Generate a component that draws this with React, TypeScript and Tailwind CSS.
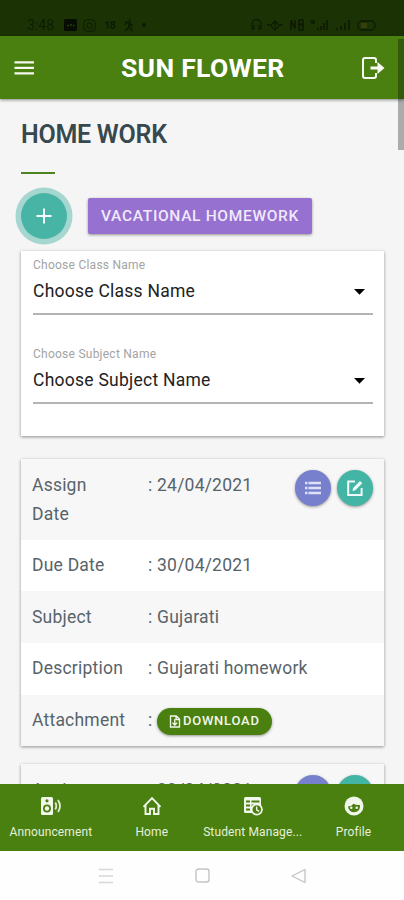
import React from 'react';

const iconBase = 'block shrink-0';

function StatusBar() {
  return (
    <div className="flex h-9 shrink-0 items-end bg-[#1b3304] pr-[26px] pb-[4px] pl-[27px] text-[#0e1b04]">
      <span className="w-[37px] text-[14px] leading-[14px] tracking-[0px]">3:48</span>
      <svg className={iconBase} width="13" height="13" viewBox="0 0 13 13">
        <rect x="0" y="0" width="13" height="12" rx="1.5" fill="#070d02" />
        <path d="M3 6.5h2M6 6h2M9 6.5h1.5" stroke="#274211" strokeWidth="1.5" />
      </svg>
      <svg className={iconBase + ' ml-[6px]'} width="13" height="13" viewBox="0 0 13 13" fill="none" stroke="currentColor">
        <rect x="0.7" y="0.7" width="11.6" height="11.6" rx="4" />
        <circle cx="6.5" cy="6.5" r="2.7" />
      </svg>
      <span className="ml-[8px] w-[11px] text-[11px] leading-[13px] font-bold tracking-[-0.8px]">18</span>
      <svg className={iconBase + ' ml-[9px]'} width="10" height="14" viewBox="0 0 10 14" fill="none" stroke="currentColor" strokeWidth="1.5">
        <circle cx="6" cy="1.8" r="1" fill="currentColor" stroke="none" />
        <path d="M1 7l1-2.5L5.3 4 5 8l2 2 .6 3M5 8l-1.4 3L1 13M5.3 4.5L7 7h2" />
      </svg>
      <span className="mb-[5px] ml-[8px] size-[4px] rounded-full bg-current" />
      <svg className={iconBase + ' ml-auto'} width="128" height="14" viewBox="0 0 128 14" fill="none" stroke="currentColor" strokeWidth="1.3">
        <path d="M2 9V6a4.5 4.5 0 0 1 9 0v3M2 7v4h2V7M11 7v4H9V7" />
        <path d="M17 7h4l4-4 4 4h4M21 8l4 4 4-4M25 4v6" />
        <path d="M41 12V2l4 9V2M49 2h4v4h-4zM49 7h4v5h-4z" strokeWidth="1.7" />
        <path d="M60 3h5M61 5h4M68 10v2M71 8v4M74 5v7M77 2v10" strokeWidth="1.7" />
        <path d="M87 10v2M91 8v4M95 5v7M99 2v10" strokeWidth="1.7" />
        <rect x="108" y="3" width="17" height="9" rx="4" />
        <path d="M111 7.500h6" stroke="#35400a" strokeWidth="5" />
      </svg>
    </div>
  );
}

function Header() {
  return (
    <header className="relative z-10 flex h-[63px] shrink-0 items-center bg-[#4a8010] pl-[14px] shadow-[0_1px_3px_rgba(0,0,0,0.45)]">
      <svg className={iconBase} width="20" height="16" viewBox="0 0 20 16" stroke="#f4f8ee" strokeWidth="2.2">
        <path d="M0.500 2.300h19.500M0.500 7.800h19.500M0.500 13.300h19.500" />
      </svg>
      <h1 className="ml-[87px] w-[164px] whitespace-nowrap text-[26.5px] leading-[30px] font-bold tracking-[0.3px] text-white">SUN FLOWER</h1>
      <svg className={iconBase + ' ml-[76px]'} width="24" height="24" viewBox="0 0 24 24" fill="none">
        <path d="M15 7V4.200Q15 2 13 2H4Q2 2 2 4v16q0 2 2 2h9q2 0 2-2.200V17" stroke="#f7faf3" strokeWidth="2" />
        <path d="M9.500 10.500h7V6l7 6-7 6v-4.500h-7z" fill="#f7faf3" />
      </svg>
    </header>
  );
}

function SelectField({ label, gap }: { label: string; gap?: boolean }) {
  return (
    <div className={gap ? 'mt-[31px]' : ''}>
      <div className="h-4 text-[12px] leading-4 tracking-[0.25px] text-[#a3a3a3]">{label}</div>
      <div className="flex h-[42px] items-start justify-between border-b-2 border-[#b4b4b4] pt-[6px] pr-[8px]">
        <span className="text-[17.5px] leading-[24px] tracking-[0.25px] text-[#222]">{label}</span>
        <svg className={iconBase + ' mt-[10px]'} width="11" height="6" viewBox="0 0 11 6">
          <path d="M0 0h11L5.500 5.800z" fill="#000" />
        </svg>
      </div>
    </div>
  );
}

function ActionButtons() {
  return (
    <div className="-mt-[0.6px] ml-auto flex gap-[6px]">
      <button className="flex size-9 items-center justify-center rounded-full bg-[#7780cc] shadow-[0_1px_3px_rgba(0,0,0,0.4)]">
        <svg className={iconBase} width="18" height="16" viewBox="0 0 18 16" stroke="#dfe1f6" strokeWidth="2.600">
          <path d="M1 3h2.500M4.500 3h12.500M1 8h2.500M4.500 8h12.500M1 13h2.500M4.500 13h12.500" />
        </svg>
      </button>
      <button className="flex size-9 items-center justify-center rounded-full bg-[#42b5a5] shadow-[0_1px_3px_rgba(0,0,0,0.4)]">
        <svg className={iconBase} width="18" height="18" viewBox="0 0 18 18" fill="none" stroke="#f0fbf9" strokeWidth="2">
          <path d="M9 2.500H2.200V16H15.600V9" />
          <path d="M6.500 12l.6-3L14 2l2.300 2.300-7 7z" fill="#f0fbf9" stroke="none" />
        </svg>
      </button>
    </div>
  );
}

function Row({ label, striped, tall, children }: { label: string; striped?: boolean; tall?: boolean; children: React.ReactNode }) {
  return (
    <div className={'flex px-[11px] pt-[11.6px] text-[17.5px] leading-[29px] tracking-[0.22px] text-[#58636a] ' + (striped ? 'bg-[#f7f7f7] ' : 'bg-white ') + (tall ? 'h-[80.5px]' : 'h-[51.7px]')}>
      <span className="w-[116px] shrink-0 pr-8 whitespace-normal">{label}</span>
      {children}
    </div>
  );
}

const cardShadow = 'shadow-[0_1px_3px_rgba(0,0,0,0.42)]';

function DownloadButton() {
  return (
    <button className="mt-[1.5px] ml-[4.5px] flex h-[27px] w-[115px] items-center rounded-full bg-[#4a8010] pl-[12px] text-[13px] leading-[28px] font-medium tracking-[0.75px] text-[#f2f7ec] shadow-[0_1px_3px_rgba(0,0,0,0.4)]">
      <svg className={iconBase + ' mr-[2px]'} width="12" height="13" viewBox="0 0 12 13" fill="none" stroke="currentColor" strokeWidth="1.3">
        <path d="M1.500 1h5.800L10.500 4v8h-9zM7 1v3.500h3.500" />
        <path d="M5.800 4v6M3.500 7.800L5.800 10l2.300-2.200" />
      </svg>
      DOWNLOAD
    </button>
  );
}

function NavItem({ label, children }: { label: string; children: React.ReactNode }) {
  return (
    <div className="flex w-[101px] flex-col items-center pt-[12px]">
      <div className="flex h-[20px] items-center">{children}</div>
      <span className="mt-[8px] whitespace-nowrap text-[12px] leading-4 tracking-[0.12px] text-[#e6efdc]">{label}</span>
    </div>
  );
}

function BottomNav() {
  return (
    <nav className="relative z-10 flex h-[67px] shrink-0 bg-[#4a8010] pl-[0.5px]">
      <NavItem label="Announcement">
        <svg className={iconBase} width="22" height="20" viewBox="0 0 22 20" fill="none">
          <path fillRule="evenodd" clipRule="evenodd" d="M2.500 1h9Q13 1 13 2.500v15q0 1.500-1.500 1.500h-9Q1 19 1 17.500v-15Q1 1 2.500 1zM7 3.200a1.600 1.600 0 1 0 0 3.200 1.600 1.600 0 0 0 0-3.200zM7 8.500a4 4 0 1 0 0 8 4 4 0 0 0 0-8z" fill="#f2f7ec" />
          <circle cx="7" cy="12.500" r="2.200" fill="#f2f7ec" />
          <path d="M15.300 6.500q2 3.500 0 7M18 4q4 6 0 12" stroke="#e3edd8" strokeWidth="1.800" />
        </svg>
      </NavItem>
      <NavItem label="Home">
        <svg className={iconBase} width="20" height="20" viewBox="0 0 20 20" fill="none" stroke="#f2f7ec" strokeWidth="1.900">
          <path d="M1.500 10.800L10 2l8.500 8.800M3.500 9v9H8v-5.300h4V18h4.500V9" />
        </svg>
      </NavItem>
      <NavItem label="Student Manage...">
        <svg className={iconBase} width="20" height="20" viewBox="0 0 20 20">
          <rect x="1" y="1" width="17" height="16" rx="1.500" fill="#f2f7ec" />
          <path d="M3 5.500h4M8.500 5.500h8M3 9.500h4M8.500 9.500h7M3 13.500h4" stroke="#4a8010" strokeWidth="1.800" />
          <circle cx="13.800" cy="13.500" r="6" fill="#f2f7ec" />
          <circle cx="13.800" cy="13.500" r="4.300" fill="#4a8010" />
          <path d="M13.600 10.500v3.300l2.500 1.600" fill="none" stroke="#f2f7ec" strokeWidth="1.300" />
        </svg>
      </NavItem>
      <NavItem label="Profile">
        <svg className={iconBase} width="20" height="20" viewBox="0 0 20 20">
          <circle cx="10" cy="10" r="9.500" fill="#f2f7ec" />
          <path d="M4 10.500q4-.3 5.500-2.800 3 1.800 6.500 1.300.5 7.300-6 7.300-5 0-6-5.800z" fill="#4a8010" />
          <circle cx="7.300" cy="11.800" r="1.200" fill="#f2f7ec" />
          <circle cx="12.700" cy="11.800" r="1.200" fill="#f2f7ec" />
        </svg>
      </NavItem>
    </nav>
  );
}

function SystemBar() {
  return (
    <div className="flex h-[49px] shrink-0 items-center bg-[#fefefe] pl-[98px]">
      <svg className={iconBase} width="16" height="16" viewBox="0 0 16 16" stroke="#d6d6d6" strokeWidth="1.600">
        <path d="M1 1.500h14M1 8h14M1 14.500h14" />
      </svg>
      <svg className={iconBase + ' ml-[81px]'} width="15" height="15" viewBox="0 0 15 15" fill="none" stroke="#c3c3c3" strokeWidth="1.400">
        <rect x="1" y="1" width="13" height="13" rx="2.500" />
      </svg>
      <svg className={iconBase + ' ml-[81px]'} width="16" height="16" viewBox="0 0 16 16" fill="none" stroke="#c3c3c3" strokeWidth="1.300" strokeLinejoin="round">
        <path d="M14 1.500v13L1 8z" />
      </svg>
    </div>
  );
}

export default function App() {
  return (
    <div className="relative flex h-[900px] w-[404px] flex-col overflow-hidden bg-[#f5f5f5] font-[Roboto,sans-serif]">
      <StatusBar />
      <Header />
      <main className="min-h-0 flex-1 overflow-hidden pt-[21px] pr-[20px] pl-[21px]">
        <h2 className="h-[30px] whitespace-nowrap text-[25px] leading-[30px] font-semibold tracking-[-0.25px] text-[#37494f]">HOME WORK</h2>
        <div className="mt-[22px] h-[2px] w-[34px] bg-[#4f8320]" />
        <div className="mt-[19px] flex h-[46px] items-center">
          <button className="flex size-[46px] items-center justify-center rounded-full bg-[#48b4a5] shadow-[0_0_0_5.5px_#a5d6cf]">
            <svg className={iconBase} width="16" height="16" viewBox="0 0 16 16" stroke="#f4fffd" strokeWidth="2">
              <path d="M0.500 8h15M8 .5v15" />
            </svg>
          </button>
          <button className="ml-[21px] h-[36px] w-[224px] rounded-[2px] bg-[#9671cf] pt-px whitespace-nowrap text-[15.5px] leading-[35px] font-medium tracking-[0.68px] text-[#f1e9fb] shadow-[0_1px_3px_rgba(0,0,0,0.4)]">
            VACATIONAL HOMEWORK
          </button>
        </div>
        <section className={'mt-[12px] h-[185px] bg-white pt-[6px] pr-[11px] pl-[12px] ' + cardShadow}>
          <SelectField label="Choose Class Name" />
          <SelectField label="Choose Subject Name" gap />
        </section>
        <section className={'mt-[23px] ' + cardShadow}>
          <Row label="Assign Date" striped tall>
            <span>: 24/04/2021</span>
            <ActionButtons />
          </Row>
          <Row label="Due Date">: 30/04/2021</Row>
          <Row label="Subject" striped>: Gujarati</Row>
          <Row label="Description">: Gujarati homework</Row>
          <Row label="Attachment" striped>
            <span>:</span>
            <DownloadButton />
          </Row>
        </section>
        <section className={'mt-[18px] ' + cardShadow}>
          <Row label="Assign Date" striped tall>
            <span>: 23/04/2021</span>
            <ActionButtons />
          </Row>
        </section>
      </main>
      <BottomNav />
      <SystemBar />
      <div className="absolute top-[39px] right-0 z-20 h-[111px] w-[6px] bg-black/30" />
    </div>
  );
}
